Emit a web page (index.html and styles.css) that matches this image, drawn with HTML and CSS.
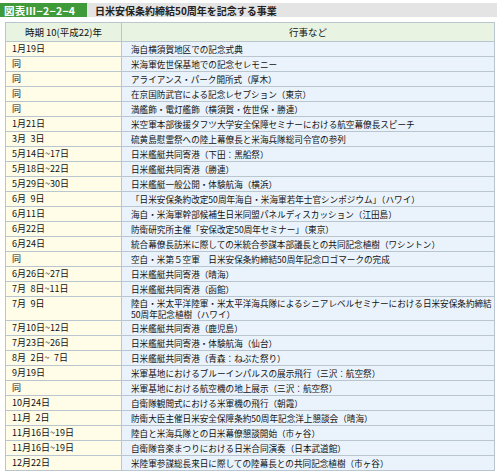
FILE: index.html
```html
<!DOCTYPE html>
<html lang="ja">
<head>
<meta charset="utf-8">
<link rel="stylesheet" href="styles.css">
</head>
<body>
<div class="page">
  <div class="title-bar">
    <span class="label">図表Ⅲ−2−2−4</span>
    <span class="title">日米安保条約締結50周年を記念する事業</span>
  </div>
  <table class="events">
    <thead>
      <tr><th class="date">時期 10(平成22)年</th><th class="item">行事など</th></tr>
    </thead>
    <tbody>
      <tr><td class="date">1月19日</td><td class="item">海自横須賀地区での記念式典</td></tr>
      <tr><td class="date">同</td><td class="item">米海軍佐世保基地での記念セレモニー</td></tr>
      <tr><td class="date">同</td><td class="item">アライアンス・パーク開所式（厚木）</td></tr>
      <tr><td class="date">同</td><td class="item">在京国防武官による記念レセプション（東京）</td></tr>
      <tr><td class="date">同</td><td class="item">満艦飾・電灯艦飾（横須賀・佐世保・勝連）</td></tr>
      <tr><td class="date">1月21日</td><td class="item">米空軍本部後援タフツ大学安全保障セミナーにおける航空幕僚長スピーチ</td></tr>
      <tr><td class="date">3月&ensp;3日</td><td class="item">硫黄島慰霊祭への陸上幕僚長と米海兵隊総司令官の参列</td></tr>
      <tr><td class="date">5月14日~17日</td><td class="item">日米艦艇共同寄港（下田：黒船祭）</td></tr>
      <tr><td class="date">5月18日~22日</td><td class="item">日米艦艇共同寄港（勝連）</td></tr>
      <tr><td class="date">5月29日~30日</td><td class="item">日米艦艇一般公開・体験航海（横浜）</td></tr>
      <tr><td class="date">6月&ensp;9日</td><td class="item">「日米安保条約改定50周年海自・米海軍若年士官シンポジウム」（ハワイ）</td></tr>
      <tr><td class="date">6月11日</td><td class="item">海自・米海軍幹部候補生日米同盟パネルディスカッション（江田島）</td></tr>
      <tr><td class="date">6月22日</td><td class="item">防衛研究所主催「安保改定50周年セミナー」（東京）</td></tr>
      <tr><td class="date">6月24日</td><td class="item">統合幕僚長訪米に際しての米統合参謀本部議長との共同記念植樹（ワシントン）</td></tr>
      <tr><td class="date">同</td><td class="item">空自・米第５空軍　日米安保条約締結50周年記念ロゴマークの完成</td></tr>
      <tr><td class="date">6月26日~27日</td><td class="item">日米艦艇共同寄港（晴海）</td></tr>
      <tr><td class="date">7月&ensp;8日~11日</td><td class="item">日米艦艇共同寄港（函館）</td></tr>
      <tr class="double"><td class="date">7月&ensp;9日</td><td class="item">陸自・米太平洋陸軍・米太平洋海兵隊によるシニアレベルセミナーにおける日米安保条約締結<br>50周年記念植樹（ハワイ）</td></tr>
      <tr><td class="date">7月10日~12日</td><td class="item">日米艦艇共同寄港（鹿児島）</td></tr>
      <tr><td class="date">7月23日~26日</td><td class="item">日米艦艇共同寄港・体験航海（仙台）</td></tr>
      <tr><td class="date">8月&ensp;2日~&ensp;7日</td><td class="item">日米艦艇共同寄港（青森：ねぶた祭り）</td></tr>
      <tr><td class="date">9月19日</td><td class="item">米軍基地におけるブルーインパルスの展示飛行（三沢：航空祭）</td></tr>
      <tr><td class="date">同</td><td class="item">米軍基地における航空機の地上展示（三沢：航空祭）</td></tr>
      <tr><td class="date">10月24日</td><td class="item">自衛隊観閲式における米軍機の飛行（朝霞）</td></tr>
      <tr><td class="date">11月&ensp;2日</td><td class="item">防衛大臣主催日米安全保障条約50周年記念洋上懇談会（晴海）</td></tr>
      <tr><td class="date">11月16日~19日</td><td class="item">陸自と米海兵隊との日米幕僚懇談開始（市ヶ谷）</td></tr>
      <tr><td class="date">11月16日~19日</td><td class="item">自衛隊音楽まつりにおける日米合同演奏（日本武道館）</td></tr>
      <tr><td class="date">12月22日</td><td class="item">米陸軍参謀総長来日に際しての陸幕長との共同記念植樹（市ヶ谷）</td></tr>
    </tbody>
  </table>
</div>
</body>
</html>
```
FILE: styles.css
```css
html, body {
  margin: 0;
  padding: 0;
  background: #ffffff;
}
body {
  font-family: "Noto Sans CJK JP", "Noto Sans", sans-serif;
  color: #111111;
}
.page {
  padding: 3px 2px 0 0;
}
.title-bar {
  display: flex;
  align-items: center;
  height: 14px;
  background: #e4e4e4;
}
.label {
  display: flex;
  align-items: center;
  height: 14px;
  width: 87px;
  padding-left: 4px;
  box-sizing: border-box;
  background: #3f9a3a;
  color: #ffffff;
  font-weight: bold;
  font-size: 10.5px;
  letter-spacing: 0.3px;
}
.title {
  margin-left: 8px;
  font-size: 10px;
  font-weight: bold;
  color: #222;
}
.events {
  margin: 5px 0 0 5px;
  width: 490px;
  border-collapse: collapse;
  font-size: 8.6px;
  table-layout: fixed;
}
.events th, .events td {
  border: 1px solid #b9c6cf;
  padding: 0;
  white-space: nowrap;
  overflow: hidden;
}
.events th {
  height: 18px;
  background: #e8f3e2;
  font-weight: normal;
  font-size: 9.5px;
  text-align: center;
  line-height: 18px;
}
.events th.date {
  width: 115px;
}
.events td {
  height: 14px;
  line-height: 14px;
}
.events td.date {
  background: #fffce8;
  padding-left: 6px;
  font-size: 9px;
}
.events td.item {
  background: #eaf3fb;
  padding-left: 9px;
}
.events tr.double td {
  height: 22px;
  line-height: 11px;
  vertical-align: top;
  padding-top: 1px;
}
```
